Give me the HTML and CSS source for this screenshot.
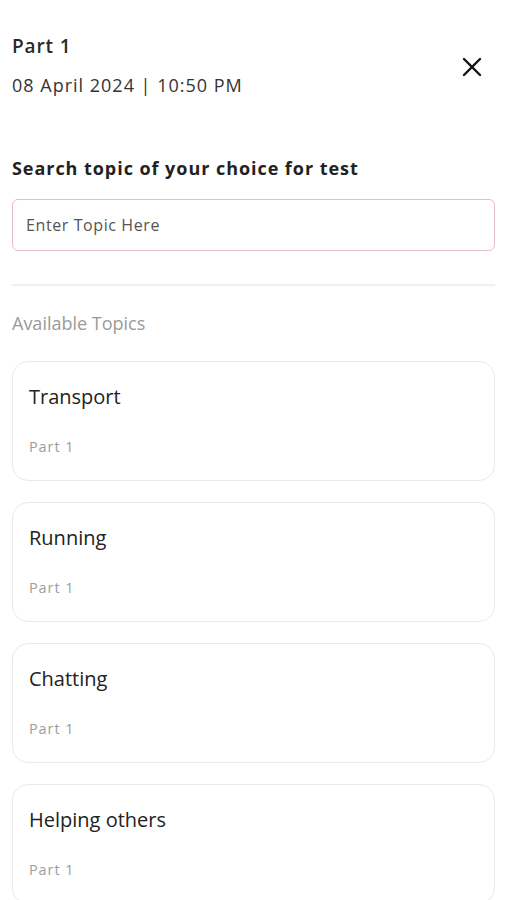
FILE: index.html
```html
<!DOCTYPE html>
<html lang="en">
<head>
    <meta charset="UTF-8">
    <title>Topics</title>
    <link rel="stylesheet" href="styles.css">
</head>
<body>
<div class="page">
    <header class="head">
        <div class="head-text">
            <h1 class="title">Part 1</h1>
            <p class="date">08 April 2024 | 10:50 PM</p>
        </div>
        <button class="close" type="button" aria-label="Close">
            <svg width="22" height="22" viewBox="0 0 22 22">
                <path d="M3 3 L19 19 M19 3 L3 19" stroke="#111" stroke-width="2.4" stroke-linecap="round" fill="none"/>
            </svg>
        </button>
    </header>

    <h2 class="search-label">Search topic of your choice for test</h2>
    <input class="search" type="text" placeholder="Enter Topic Here">

    <hr class="divider">

    <p class="section">Available Topics</p>

    <ul class="topics">
        <li class="card"><span class="card-name">Transport</span><span class="card-part">Part 1</span></li>
        <li class="card"><span class="card-name">Running</span><span class="card-part">Part 1</span></li>
        <li class="card"><span class="card-name">Chatting</span><span class="card-part">Part 1</span></li>
        <li class="card"><span class="card-name">Helping others</span><span class="card-part">Part 1</span></li>
    </ul>
</div>
</body>
</html>
```

FILE: styles.css
```css
*{
    margin: 0;
    padding: 0;
    box-sizing: border-box;
}
body{
    background: #fff;
    font-family: "Open Sans", "Noto Sans", sans-serif;
    color: #222;
}
.page{
    padding: 30px 12px 0;
}
/* header row */
.head{
    display: flex;
    justify-content: space-between;
    align-items: center;
}
.title{
    font-size: 19px;
    font-weight: 600;
    line-height: 32px;
    letter-spacing: 0.9px;
    color: #2a2a2a;
}
.date{
    font-size: 18px;
    line-height: 46px;
    letter-spacing: 1px;
    color: #333;
}
.close{
    border: none;
    background: none;
    width: 22px;
    height: 22px;
    margin-right: 12px;
    margin-bottom: 4px;
}
/* search */
.search-label{
    margin-top: 48px;
    font-size: 18px;
    font-weight: 700;
    line-height: 24px;
    letter-spacing: 0.95px;
    color: #222;
}
.search{
    display: block;
    width: 100%;
    height: 52px;
    margin-top: 19px;
    padding: 0 13px;
    border: 1px solid #e6bfc5;
    border-radius: 6px;
    font-family: inherit;
    font-size: 16px;
    letter-spacing: 0.6px;
    outline: none;
}
.search::placeholder{
    color: #555;
}
.divider{
    border: none;
    border-top: 2px solid #f0f0f0;
    margin-top: 33px;
}
.section{
    margin-top: 25px;
    font-size: 18px;
    line-height: 24px;
    color: #9a9a9a;
}
/* topic cards */
.topics{
    list-style: none;
    margin-top: 26px;
    display: flex;
    flex-direction: column;
    gap: 21px;
}
.card{
    height: 120px;
    border: 1px solid #e9e9e9;
    border-radius: 16px;
    padding: 22px 16px 0;
    display: flex;
    flex-direction: column;
}
.card-name{
    font-size: 20px;
    line-height: 26px;
    color: #222;
}
.card-part{
    margin-top: 27px;
    font-size: 14.5px;
    line-height: 20px;
    letter-spacing: 0.9px;
    color: #9d9d9d;
}
```
